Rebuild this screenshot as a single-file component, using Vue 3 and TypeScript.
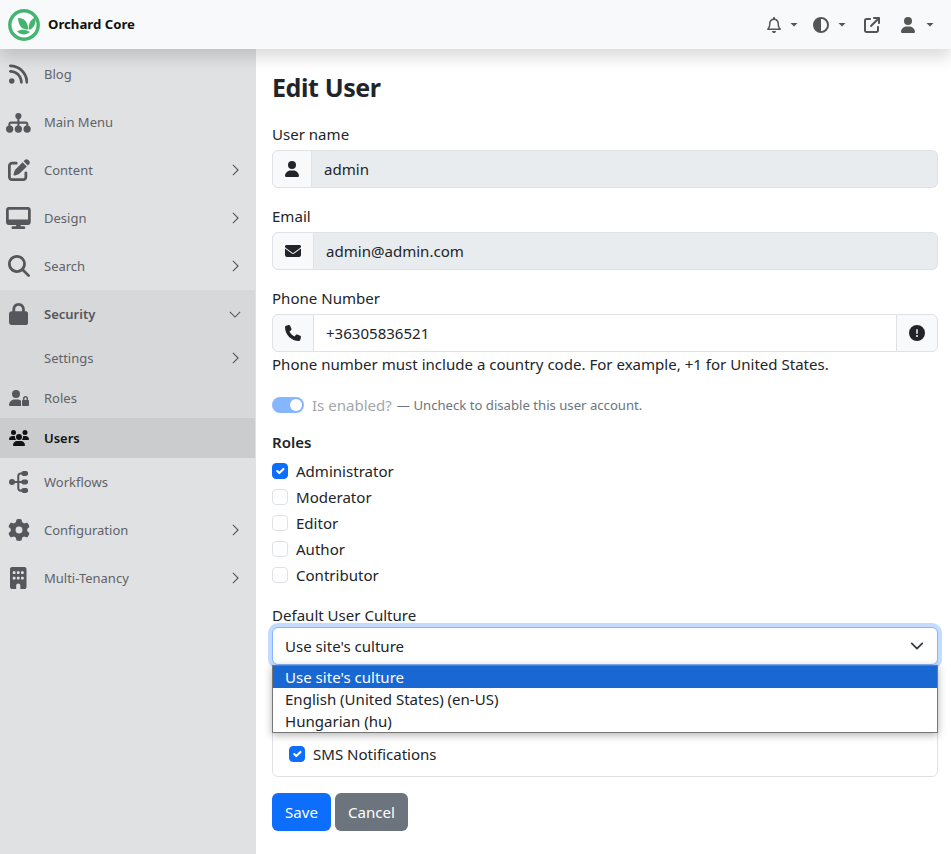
<script setup lang="ts">
interface Icon { vb: string; d: string }
interface NavItem { label: string; icon?: Icon; chevron?: "right" | "down"; kind?: string }

const rss: Icon = { vb: "0 0 448 512", d: "M0 64C0 46.3 14.3 32 32 32c229.8 0 416 186.2 416 416c0 17.7-14.3 32-32 32s-32-14.3-32-32C384 253.6 226.4 96 32 96C14.3 96 0 81.7 0 64zM0 416a64 64 0 1 1 128 0A64 64 0 1 1 0 416zM32 160c159.1 0 288 128.9 288 288c0 17.7-14.3 32-32 32s-32-14.3-32-32c0-123.7-100.3-224-224-224c-17.7 0-32-14.3-32-32s14.3-32 32-32z" };
const sitemap: Icon = { vb: "0 0 576 512", d: "M288 45a72 72 0 1 1 0 144a72 72 0 0 1 0-144zM264 180h48v66h152c31 0 56 25 56 56v40h-48v-40c0-4-4-8-8-8H312v48h-48v-48H112c-4 0-8 4-8 8v40H56v-40c0-31 25-56 56-56h152zM85 335a85 85 0 1 1 0 170a85 85 0 0 1 0-170zM288 335a85 85 0 1 1 0 170a85 85 0 0 1 0-170zM491 335a85 85 0 1 1 0 170a85 85 0 0 1 0-170z" };
const edit: Icon = { vb: "0 0 512 512", d: "M471.6 21.7c-21.9-21.9-57.3-21.9-79.2 0L362.3 51.7l97.9 97.9 30.1-30.1c21.9-21.9 21.9-57.3 0-79.2L471.6 21.7zm-299.2 220c-6.1 6.1-10.8 13.6-13.5 21.9l-29.6 88.8c-2.9 8.6-.6 18.1 5.8 24.6s15.9 8.7 24.6 5.8l88.8-29.6c8.2-2.7 15.7-7.4 21.9-13.5L437.7 172.3 339.7 74.3 172.4 241.7zM96 64C43 64 0 107 0 160V416c0 53 43 96 96 96H352c53 0 96-43 96-96V320c0-17.7-14.3-32-32-32s-32 14.3-32 32v96c0 17.7-14.3 32-32 32H96c-17.7 0-32-14.3-32-32V160c0-17.7 14.3-32 32-32h96c17.7 0 32-14.3 32-32s-14.3-32-32-32H96z" };
const desktop: Icon = { vb: "0 0 576 512", d: "M64 0C28.7 0 0 28.7 0 64V352c0 35.3 28.7 64 64 64H240l-10.7 32H160c-17.7 0-32 14.3-32 32s14.3 32 32 32H416c17.7 0 32-14.3 32-32s-14.3-32-32-32H346.7L336 416H512c35.3 0 64-28.7 64-64V64c0-35.3-28.7-64-64-64H64zM512 64V288H64V64H512z" };
const search: Icon = { vb: "0 0 512 512", d: "M416 208c0 45.9-14.9 88.3-40 122.7L502.6 457.4c12.5 12.5 12.5 32.8 0 45.3s-32.8 12.5-45.3 0L330.7 376c-34.4 25.2-76.8 40-122.7 40C93.1 416 0 322.9 0 208S93.1 0 208 0S416 93.1 416 208zM208 352a144 144 0 1 0 0-288 144 144 0 1 0 0 288z" };
const lock: Icon = { vb: "0 0 448 512", d: "M144 144v48H304V144c0-44.2-35.8-80-80-80s-80 35.8-80 80zM80 192V144C80 64.5 144.5 0 224 0s144 64.5 144 144v48h16c35.3 0 64 28.7 64 64V448c0 35.3-28.7 64-64 64H64c-35.3 0-64-28.7-64-64V256c0-35.3 28.7-64 64-64H80z" };
const userLock: Icon = { vb: "0 0 640 512", d: "M224 256A128 128 0 1 0 224 0a128 128 0 1 0 0 256zm-45.7 48C79.8 304 0 383.8 0 482.3C0 498.7 13.3 512 29.7 512H392.6c-5.4-9.4-8.6-20.3-8.6-32V352c0-2.1 .1-4.2 .3-6.3c-31-26-71-41.7-114.6-41.7H178.3zM528 240c17.7 0 32 14.3 32 32v48H496V272c0-17.7 14.3-32 32-32zm-80 32v48c-17.7 0-32 14.3-32 32V480c0 17.7 14.3 32 32 32H608c17.7 0 32-14.3 32-32V352c0-17.7-14.3-32-32-32V272c0-44.2-35.8-80-80-80s-80 35.8-80 80z" };
const users: Icon = { vb: "0 0 640 512", d: "M144 0a80 80 0 1 1 0 160A80 80 0 1 1 144 0zM512 0a80 80 0 1 1 0 160A80 80 0 1 1 512 0zM0 298.7C0 239.8 47.8 192 106.7 192h42.7c15.9 0 31 3.5 44.6 9.7c-1.3 7.2-1.9 14.7-1.9 22.3c0 38.2 16.8 72.5 43.3 96c-.2 0-.4 0-.7 0H21.3C9.6 320 0 310.4 0 298.7zM405.3 320c-.2 0-.4 0-.7 0c26.6-23.5 43.3-57.8 43.3-96c0-7.6-.7-15-1.9-22.3c13.6-6.3 28.7-9.7 44.6-9.7h42.7C592.2 192 640 239.8 640 298.7c0 11.8-9.6 21.3-21.3 21.3H405.3zM224 224a96 96 0 1 1 192 0 96 96 0 1 1 -192 0zM128 485.3C128 411.7 187.7 352 261.3 352H378.7C452.3 352 512 411.7 512 485.3c0 14.7-11.9 26.7-26.7 26.7H154.7c-14.7 0-26.7-11.9-26.7-26.7z" };
const workflow: Icon = { vb: "0 0 448 512", d: "M70 186a70 70 0 1 1 0 140a70 70 0 0 1 0-140zM120 232h72V112c0-44 36-80 80-80h30v48h-30c-18 0-32 14-32 32v120h62v48h-62v120c0 18 14 32 32 32h30v48h-30c-44 0-80-36-80-80V280h-72zM340 0h50c32 0 58 26 58 58s-26 58-58 58h-50c-32 0-58-26-58-58s26-58 58-58zM340 198h50c32 0 58 26 58 58s-26 58-58 58h-50c-32 0-58-26-58-58s26-58 58-58zM340 396h50c32 0 58 26 58 58s-26 58-58 58h-50c-32 0-58-26-58-58s26-58 58-58z" };
const gear: Icon = { vb: "0 0 512 512", d: "M495.9 166.6c3.2 8.7 .5 18.4-6.4 24.6l-43.3 39.4c1.1 8.3 1.7 16.8 1.7 25.4s-.6 17.1-1.7 25.4l43.3 39.4c6.9 6.2 9.6 15.9 6.4 24.6c-4.4 11.9-9.7 23.3-15.8 34.3l-4.7 8.1c-6.6 11-14 21.4-22.1 31.2c-5.9 7.2-15.7 9.6-24.5 6.8l-55.7-17.7c-13.4 10.3-28.2 18.9-44 25.4l-12.5 57.1c-2 9.1-9 16.3-18.2 17.8c-13.8 2.3-28 3.5-42.5 3.5s-28.7-1.2-42.5-3.5c-9.2-1.5-16.2-8.7-18.2-17.8l-12.5-57.1c-15.8-6.5-30.6-15.1-44-25.4L83.1 425.9c-8.8 2.8-18.6 .3-24.5-6.8c-8.1-9.8-15.5-20.2-22.1-31.2l-4.7-8.1c-6.1-11-11.4-22.4-15.8-34.3c-3.2-8.7-.5-18.4 6.4-24.6l43.3-39.4C64.6 273.1 64 264.6 64 256s.6-17.1 1.7-25.4L22.4 191.2c-6.9-6.2-9.6-15.9-6.4-24.6c4.4-11.9 9.7-23.3 15.8-34.3l4.7-8.1c6.6-11 14-21.4 22.1-31.2c5.9-7.2 15.7-9.6 24.5-6.8l55.7 17.7c13.4-10.3 28.2-18.9 44-25.4l12.5-57.1c2-9.1 9-16.3 18.2-17.8C227.3 1.2 241.5 0 256 0s28.7 1.2 42.5 3.5c9.2 1.5 16.2 8.7 18.2 17.8l12.5 57.1c15.8 6.5 30.6 15.1 44 25.4l55.7-17.7c8.8-2.8 18.6-.3 24.5 6.8c8.1 9.8 15.5 20.2 22.1 31.2l4.7 8.1c6.1 11 11.4 22.4 15.8 34.3zM256 336a80 80 0 1 0 0-160 80 80 0 1 0 0 160z" };
const building: Icon = { vb: "0 0 384 512", d: "M48 0C21.5 0 0 21.5 0 48V464c0 26.5 21.5 48 48 48h96V432c0-26.5 21.5-48 48-48s48 21.5 48 48v80h96c26.5 0 48-21.5 48-48V48c0-26.5-21.5-48-48-48H48zM64 240c0-8.8 7.2-16 16-16h32c8.8 0 16 7.2 16 16v32c0 8.8-7.2 16-16 16H80c-8.8 0-16-7.2-16-16V240zm112-16h32c8.8 0 16 7.2 16 16v32c0 8.8-7.2 16-16 16H176c-8.8 0-16-7.2-16-16V240c0-8.8 7.2-16 16-16zm80 16c0-8.8 7.2-16 16-16h32c8.8 0 16 7.2 16 16v32c0 8.8-7.2 16-16 16H272c-8.8 0-16-7.2-16-16V240zM80 96h32c8.8 0 16 7.2 16 16v32c0 8.8-7.2 16-16 16H80c-8.8 0-16-7.2-16-16V112c0-8.8 7.2-16 16-16zm80 16c0-8.8 7.2-16 16-16h32c8.8 0 16 7.2 16 16v32c0 8.8-7.2 16-16 16H176c-8.8 0-16-7.2-16-16V112zM272 96h32c8.8 0 16 7.2 16 16v32c0 8.8-7.2 16-16 16H272c-8.8 0-16-7.2-16-16V112c0-8.8 7.2-16 16-16z" };
const user: Icon = { vb: "0 0 448 512", d: "M224 256A128 128 0 1 0 224 0a128 128 0 1 0 0 256zm-45.7 48C79.8 304 0 383.8 0 482.3C0 498.7 13.3 512 29.7 512H418.3c16.4 0 29.7-13.3 29.7-29.7C448 383.8 368.2 304 269.7 304H178.3z" };
const envelope: Icon = { vb: "0 0 512 512", d: "M48 64C21.5 64 0 85.5 0 112c0 15.1 7.1 29.3 19.2 38.4L236.8 313.6c11.4 8.5 27 8.5 38.4 0L492.8 150.4c12.1-9.1 19.2-23.3 19.2-38.4c0-26.5-21.5-48-48-48H48zM0 176V384c0 35.3 28.7 64 64 64H448c35.3 0 64-28.7 64-64V176L294.4 339.2c-22.8 17.1-54 17.1-76.8 0L0 176z" };
const phone: Icon = { vb: "0 0 512 512", d: "M164.9 24.6c-7.7-18.6-28-28.5-47.4-23.2l-88 24C12.1 30.2 0 46 0 64C0 311.4 200.6 512 448 512c18 0 33.8-12.1 38.6-29.5l24-88c5.3-19.4-4.6-39.7-23.2-47.4l-96-40c-16.3-6.8-35.2-2.1-46.3 11.6L304.7 368C234.3 334.7 177.3 277.7 144 207.3L193.3 167c13.7-11.2 18.4-30 11.6-46.3l-40-96z" };
const alert: Icon = { vb: "0 0 512 512", d: "M256 512A256 256 0 1 0 256 0a256 256 0 1 0 0 512zm0-384c13.3 0 24 10.7 24 24V264c0 13.3-10.7 24-24 24s-24-10.7-24-24V152c0-13.3 10.7-24 24-24zM224 352a32 32 0 1 1 64 0 32 32 0 1 1 -64 0z" };
const bell: Icon = { vb: "0 0 448 512", d: "M224 0c-17.7 0-32 14.3-32 32V51.2C119 66 64 130.6 64 208v25.4c0 45.4-15.5 89.5-43.8 124.9L5.3 377c-5.8 7.2-6.9 17.1-2.9 25.4S14.8 416 24 416H424c9.2 0 17.6-5.3 21.6-13.6s2.9-18.2-2.9-25.4l-14.9-18.6C399.5 322.9 384 278.8 384 233.4V208c0-77.4-55-142-128-156.8V32c0-17.7-14.3-32-32-32zm0 96c61.9 0 112 50.1 112 112v25.4c0 47.9 13.9 94.6 39.7 134.6H72.3C98.1 328 112 281.3 112 233.4V208c0-61.9 50.1-112 112-112zm64 352H224 160c0 17 6.7 33.3 18.7 45.3s28.3 18.7 45.3 18.7s33.3-6.7 45.3-18.7s18.7-28.3 18.7-45.3z" };
const halfCircle: Icon = { vb: "0 0 512 512", d: "M448 256c0-106-86-192-192-192V448c106 0 192-86 192-192zM0 256a256 256 0 1 1 512 0A256 256 0 1 1 0 256z" };
const external: Icon = { vb: "0 0 512 512", d: "M320 0c-17.7 0-32 14.3-32 32s14.3 32 32 32h82.7L201.4 265.4c-12.5 12.5-12.5 32.8 0 45.3s32.8 12.5 45.3 0L448 109.3V192c0 17.7 14.3 32 32 32s32-14.3 32-32V32c0-17.7-14.3-32-32-32H320zM80 32C35.8 32 0 67.8 0 112V432c0 44.2 35.8 80 80 80H400c44.2 0 80-35.8 80-80V320c0-17.7-14.3-32-32-32s-32 14.3-32 32V432c0 8.8-7.2 16-16 16H80c-8.8 0-16-7.2-16-16V112c0-8.8 7.2-16 16-16H192c17.7 0 32-14.3 32-32s-14.3-32-32-32H80z" };

const topNav: NavItem[] = [
  { label: "Blog", icon: rss },
  { label: "Main Menu", icon: sitemap },
  { label: "Content", icon: edit, chevron: "right" },
  { label: "Design", icon: desktop, chevron: "right" },
  { label: "Search", icon: search, chevron: "right" },
];
const bottomNav: NavItem[] = [
  { label: "Workflows", icon: workflow },
  { label: "Configuration", icon: gear, chevron: "right" },
  { label: "Multi-Tenancy", icon: building, chevron: "right" },
];
const roles = [
  { name: "Administrator", checked: true },
  { name: "Moderator", checked: false },
  { name: "Editor", checked: false },
  { name: "Author", checked: false },
  { name: "Contributor", checked: false },
];
const cultures = ["Use site's culture", "English (United States) (en-US)", "Hungarian (hu)"];
</script>

<template>
  <div class="page">
    <header class="topbar">
      <div class="brand">
        <svg class="logo" viewBox="0 0 32 32" aria-hidden="true">
          <circle cx="16" cy="16" r="14.200" fill="#fff" stroke="#43b571" stroke-width="3.4" />
          <path fill="#43b571" d="M10 9c5-.5 10 3 10.500 11.500-6 .5-10-3-10.500-11.500zM27 8.500c1.500 5-.5 10-5.500 12.500-1.800-5 .5-10 5.500-12.500zM9 22.500c4-2.500 8.500-2.500 13 .5-4 3.500-9 3-13-.5z" />
        </svg>
        <span class="brand-name">Orchard Core</span>
      </div>
      <div class="tools">
        <span class="tool"><svg class="tool-icon" :viewBox="bell.vb"><path :d="bell.d" /></svg><i class="caret"></i></span>
        <span class="tool"><svg class="tool-icon" :viewBox="halfCircle.vb"><path :d="halfCircle.d" /></svg><i class="caret"></i></span>
        <span class="tool ext"><svg class="tool-icon" :viewBox="external.vb"><path :d="external.d" /></svg></span>
        <span class="tool profile"><svg class="tool-icon" :viewBox="user.vb"><path :d="user.d" /></svg><i class="caret"></i></span>
      </div>
    </header>

    <div class="body">
      <nav class="sidebar">
        <a v-for="item in topNav" :key="item.label" class="nav-item">
          <span class="nav-icon"><svg :viewBox="item.icon!.vb"><path :d="item.icon!.d" /></svg></span>
          <span class="nav-label">{{ item.label }}</span>
          <svg v-if="item.chevron" class="chev" viewBox="0 0 8 14"><path d="M1 1l6 6-6 6" /></svg>
        </a>

        <div class="group">
          <a class="nav-item strong">
            <span class="nav-icon"><svg :viewBox="lock.vb"><path :d="lock.d" /></svg></span>
            <span class="nav-label">Security</span>
            <svg class="chev-down" viewBox="0 0 14 8"><path d="M1 1l6 6 6-6" /></svg>
          </a>
          <a class="sub-item settings">
            <span class="nav-icon"></span>
            <span class="nav-label">Settings</span>
            <svg class="chev" viewBox="0 0 8 14"><path d="M1 1l6 6-6 6" /></svg>
          </a>
          <a class="sub-item">
            <span class="nav-icon small"><svg :viewBox="userLock.vb"><path :d="userLock.d" /></svg></span>
            <span class="nav-label">Roles</span>
          </a>
          <a class="sub-item active">
            <span class="nav-icon small"><svg :viewBox="users.vb"><path :d="users.d" /></svg></span>
            <span class="nav-label">Users</span>
          </a>
        </div>

        <a v-for="item in bottomNav" :key="item.label" class="nav-item">
          <span class="nav-icon"><svg :viewBox="item.icon!.vb"><path :d="item.icon!.d" /></svg></span>
          <span class="nav-label">{{ item.label }}</span>
          <svg v-if="item.chevron" class="chev" viewBox="0 0 8 14"><path d="M1 1l6 6-6 6" /></svg>
        </a>
      </nav>

      <main class="main">
        <h1 class="title">Edit User</h1>

        <div class="field">
          <label class="label">User name</label>
          <div class="input-group">
            <span class="addon user-addon"><svg class="addon-icon" :viewBox="user.vb"><path :d="user.d" /></svg></span>
            <div class="control disabled">admin</div>
          </div>
        </div>

        <div class="field">
          <label class="label">Email</label>
          <div class="input-group">
            <span class="addon"><svg class="addon-icon" :viewBox="envelope.vb"><path :d="envelope.d" /></svg></span>
            <div class="control disabled">admin@admin.com</div>
          </div>
        </div>

        <div class="phone-field">
          <label class="label">Phone Number</label>
          <div class="input-group">
            <span class="addon"><svg class="addon-icon" :viewBox="phone.vb"><path :d="phone.d" /></svg></span>
            <div class="control">+36305836521</div>
            <span class="addon trailing"><svg class="addon-icon" :viewBox="alert.vb"><path :d="alert.d" /></svg></span>
          </div>
          <div class="help">Phone number must include a country code. For example, +1 for United States.</div>
        </div>

        <div class="switch-row">
          <span class="switch"><i class="knob"></i></span>
          <span class="switch-label">Is enabled?</span>
          <span class="switch-hint">— Uncheck to disable this user account.</span>
        </div>

        <div class="roles-title">Roles</div>
        <div class="roles">
          <div v-for="role in roles" :key="role.name" class="check-row">
            <span class="check" :class="{ on: role.checked }">
              <svg v-if="role.checked" viewBox="0 0 20 20"><path d="m6 10 3 3 6-6" /></svg>
            </span>
            <span>{{ role.name }}</span>
          </div>
        </div>

        <label class="label culture-label">Default User Culture</label>
        <div class="select-wrap">
          <div class="select">
            <span>Use site's culture</span>
            <svg class="select-arrow" viewBox="0 0 16 16"><path d="m2 5 6 6 6-6" /></svg>
          </div>
          <ul class="options">
            <li v-for="(c, i) in cultures" :key="c" :class="{ selected: i === 0 }">{{ c }}</li>
          </ul>
        </div>

        <div class="card">
          <div class="check-row sms">
            <span class="check on"><svg viewBox="0 0 20 20"><path d="m6 10 3 3 6-6" /></svg></span>
            <span>SMS Notifications</span>
          </div>
        </div>

        <div class="actions">
          <button class="btn primary" type="button">Save</button>
          <button class="btn secondary" type="button">Cancel</button>
        </div>
      </main>
    </div>
  </div>
</template>

<style>
html, body { margin: 0; padding: 0; background: #fff; overflow: hidden; }
</style>

<style scoped>
.page {
  width: 951px;
  height: 854px;
  display: flex;
  flex-direction: column;
  font-family: "Noto Sans", "Open Sans", sans-serif;
  font-size: 15.05px;
  line-height: 24px;
  color: #212529;
  overflow: hidden;
}
.topbar {
  height: 49px;
  flex: none;
  display: flex;
  align-items: center;
  justify-content: space-between;
  background: #f8f9fa;
  box-shadow: 0 8px 16px rgba(0, 0, 0, 0.15);
  position: relative;
  z-index: 2;
}
.brand { display: flex; align-items: center; padding-left: 8px; }
.logo { width: 32px; height: 32px; }
.brand-name { margin-left: 8px; font-size: 13.2px; font-weight: 700; color: #111; position: relative; top: -1px; }
.tools { display: flex; align-items: center; padding-right: 18px; }
.tool { display: flex; align-items: center; margin-left: 16px; color: #555; }
.tool.ext { margin-left: 19px; }
.tool.profile { margin-left: 21px; }
.tool.profile .caret { margin-left: 11px; }
.tool-icon { height: 16px; fill: #555; display: block; }
.caret {
  width: 8px;
  height: 4px;
  margin-left: 9px;
  margin-right: -1px;
  background: #555;
  clip-path: polygon(0 0, 100% 0, 50% 100%);
}
.body { flex: 1; display: flex; min-height: 0; }
.sidebar {
  width: 256px;
  flex: none;
  padding-right: 1px;
  box-sizing: border-box;
  background: #e0e1e3;
  font-size: 13px;
  color: #5f6368;
  padding-top: 1px;
}
.nav-item, .sub-item { display: flex; align-items: center; padding-right: 16px; }
.nav-item { height: 48px; }
.sub-item { height: 40px; }
.nav-icon { width: 37px; margin-right: 7px; display: flex; justify-content: center; flex: none; }
.nav-icon svg { height: 22px; fill: #54575b; display: block; }
.nav-icon.small svg { height: 16px; }
.nav-label { flex: 1; }
.chev { width: 7px; height: 12px; fill: none; stroke: #54575b; stroke-width: 1.3; }
.chev-down { width: 12px; height: 7px; fill: none; stroke: #54575b; stroke-width: 1.3; margin-right: -2px; }
.group { background: #d7d8da; }
.strong .nav-label { font-weight: 600; color: #54575b; }
.active { background: #cbcccd; color: #111; font-weight: 600; }
.active .nav-icon svg { fill: #111; }
.main { flex: 1; min-width: 0; padding: 16px 13px 0 16px; }
.title { margin: 0 0 17px; font-size: 25px; letter-spacing: -0.4px; line-height: 44px; height: 40px; font-weight: 700; color: #212529; }
.field { margin-bottom: 16px; }
.label { display: block; margin-bottom: 4px; }
.input-group { display: flex; height: 38px; }
.addon {
  flex: none;
  width: 40px;
  box-sizing: content-box;
  display: flex;
  align-items: center;
  justify-content: center;
  background: #f8f9fa;
  border: 1px solid #dee2e6;
  border-radius: 6px 0 0 6px;
  height: 36px;
}
.user-addon { width: 38px; }
.trailing { border-radius: 0 6px 6px 0; width: 40px; }
.addon-icon { height: 16px; fill: #212529; display: block; }
.control {
  flex: 1;
  min-width: 0;
  height: 36px;
  line-height: 36px;
  padding: 0 12px;
  border: 1px solid #dee2e6;
  border-left: 0;
  background: #fff;
  border-radius: 0 6px 6px 0;
}
.control.disabled { background: #e9ecef; }
.phone-field .control { border-radius: 0; border-right: 0; }
.help { margin-top: 0; }
.switch-row { display: flex; align-items: center; margin-top: 17px; height: 24px; }
.switch {
  width: 32px;
  height: 16px;
  border-radius: 8px;
  background: #86b7fe;
  position: relative;
  flex: none;
}
.knob {
  position: absolute;
  right: 2px;
  top: 2px;
  width: 12px;
  height: 12px;
  border-radius: 50%;
  background: #fff;
}
.switch-label { margin-left: 8px; color: #a4a7aa; }
.switch-hint { margin-left: 5px; font-size: 13.15px; color: #6c757d; }
.roles-title { margin-top: 13px; font-weight: 600; height: 24px; }
.roles { margin-top: 4px; }
.check-row { display: flex; align-items: center; height: 26px; }
.check {
  width: 14px;
  height: 14px;
  flex: none;
  margin-right: 8px;
  border: 1px solid #dee2e6;
  border-radius: 4px;
  background: #fff;
  display: flex;
}
.check.on { background: #0d6efd; border-color: #0d6efd; }
.check svg { width: 14px; height: 14px; fill: none; stroke: #fff; stroke-width: 3; stroke-linecap: round; stroke-linejoin: round; }
.culture-label { margin: 15px 0 0; }
.select-wrap { position: relative; }
.select {
  height: 36px;
  display: flex;
  align-items: center;
  justify-content: space-between;
  padding: 0 12px;
  border: 1px solid #86b7fe;
  border-radius: 6px;
  background: #fff;
  box-shadow: 0 0 0 4px rgba(13, 110, 253, 0.25);
}
.select-arrow { width: 14px; height: 14px; margin-right: 1px; fill: none; stroke: #343a40; stroke-width: 2; stroke-linecap: round; stroke-linejoin: round; }
.options {
  position: absolute;
  left: 0;
  right: 0;
  top: 38px;
  margin: 0;
  padding: 0;
  list-style: none;
  background: #fff;
  border: 1px solid #767676;
  box-shadow: 0 2px 8px rgba(0, 0, 0, 0.3);
  z-index: 3;
}
.options li { height: 22px; line-height: 22px; padding: 0 12px; }
.options li.selected { background: #1967d2; color: #fff; }
.card {
  margin-top: 16px;
  height: 85px;
  border: 1px solid #dee2e6;
  border-radius: 6px;
  display: flex;
  align-items: flex-end;
  padding: 0 16px 9px;
}
.actions { display: flex; gap: 4px; margin-top: 16px; }
.btn {
  height: 38px;
  padding: 0 12px;
  border: 1px solid transparent;
  border-radius: 6px;
  font: inherit;
  color: #fff;
}
.primary { background: #0d6efd; width: 59px; }
.secondary { background: #6c757d; width: 73px; }
</style>
